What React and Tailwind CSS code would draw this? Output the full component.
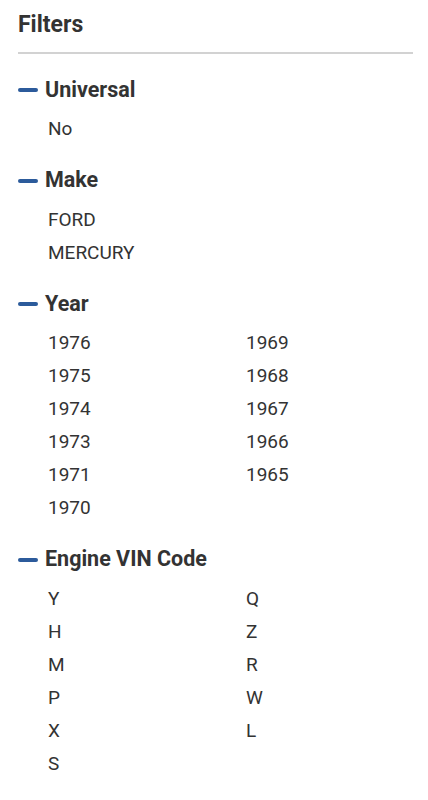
import React from "react";

const sections = [
  { title: "Universal", cols: [["No"]] },
  { title: "Make", cols: [["FORD", "MERCURY"]] },
  {
    title: "Year",
    cols: [
      ["1976", "1975", "1974", "1973", "1971", "1970"],
      ["1969", "1968", "1967", "1966", "1965"],
    ],
  },
  {
    title: "Engine VIN Code",
    cols: [
      ["Y", "H", "M", "P", "X", "S"],
      ["Q", "Z", "R", "W", "L"],
    ],
  },
];

function Section({ title, cols }) {
  return (
    <div className="mb-[20.5px]">
      <div className="flex items-center h-[30px]">
        <span className="w-[20px] h-[4px] rounded-full bg-[#2c5b9b] mr-[7px]" />
        <h2 className="text-[21.5px] font-bold text-[#333]">{title}</h2>
      </div>
      <div className="flex pl-[30px] pt-[7px]">
        {cols.map((col, i) => (
          <ul key={i} className="w-[198px] shrink-0">
            {col.map((item) => (
              <li key={item} className="h-[33px] leading-[33px] text-[19px] text-[#333]">
                {item}
              </li>
            ))}
          </ul>
        ))}
      </div>
    </div>
  );
}

export default function App() {
  return (
    <div className="bg-white min-h-[800px] px-[18px] pt-[10px] font-['Roboto',sans-serif] overflow-hidden">
      <h1 className="text-[23px] font-bold text-[#333] leading-[30px]">Filters</h1>
      <div className="mt-[12px] mr-[-3px] h-[2px] bg-[#d2d2d2]" />
      <div className="pt-[21px]">
        {sections.map((s) => (
          <Section key={s.title} {...s} />
        ))}
      </div>
    </div>
  );
}
